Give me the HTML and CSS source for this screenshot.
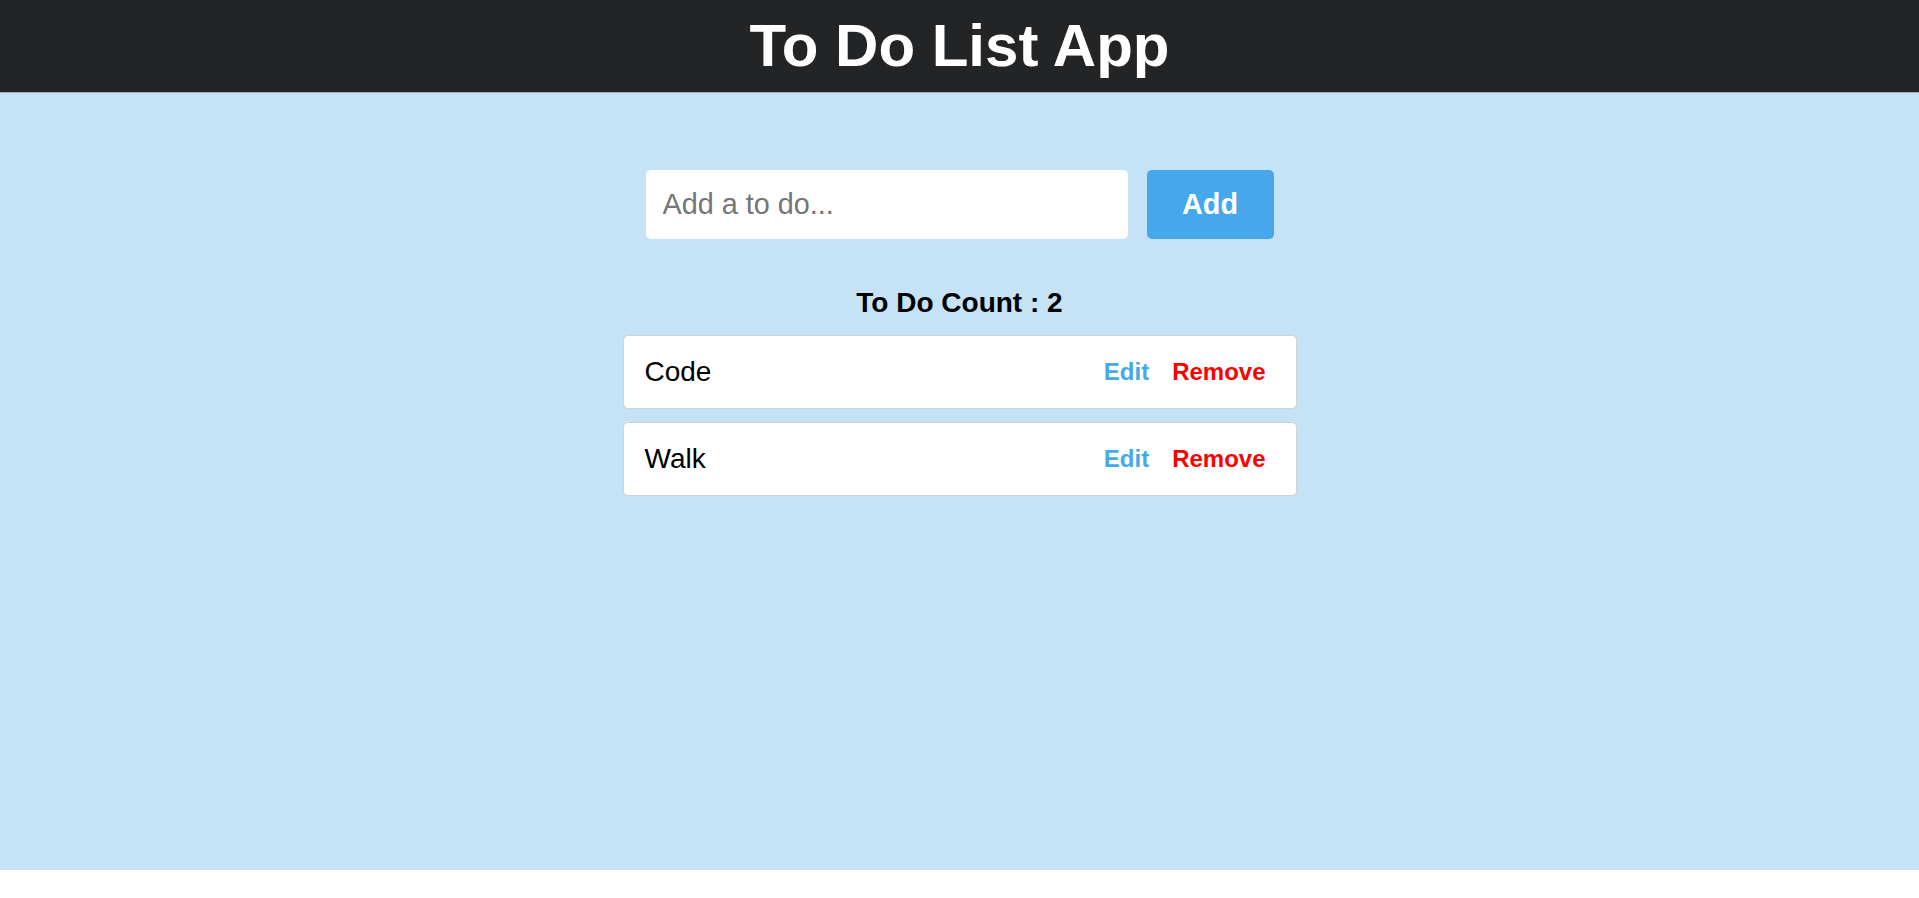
FILE: index.html
```html
<!DOCTYPE html>
<html lang="en">
<head>
<meta charset="utf-8">
<title>To Do List App</title>
<link rel="stylesheet" href="styles.css">
</head>
<body>
<header class="app-header">
  <h1 class="app-title">To Do List App</h1>
</header>
<main class="app-main">
  <form class="add-form" onsubmit="return false">
    <input class="add-input" type="text" placeholder="Add a to do...">
    <button class="add-button" type="submit">Add</button>
  </form>
  <h2 class="todo-count">To Do Count : 2</h2>
  <ul class="todo-list">
    <li class="todo-item">
      <span class="todo-text">Code</span>
      <div class="todo-actions">
        <button class="action edit">Edit</button>
        <button class="action remove">Remove</button>
      </div>
    </li>
    <li class="todo-item">
      <span class="todo-text">Walk</span>
      <div class="todo-actions">
        <button class="action edit">Edit</button>
        <button class="action remove">Remove</button>
      </div>
    </li>
  </ul>
</main>
</body>
</html>
```
FILE: styles.css
```css
* { box-sizing: border-box; }
html, body {
  margin: 0;
  padding: 0;
  background: #ffffff;
  font-family: "Liberation Sans", Arial, sans-serif;
}
.app-header {
  height: 93px;
  background: #232426;
  border-bottom: 1px solid #a3acb3;
  display: flex;
  align-items: center;
  justify-content: center;
}
.app-title {
  margin: 0;
  color: #ffffff;
  font-size: 60px;
  font-weight: bold;
  line-height: 1;
}
.app-main {
  height: 777px;
  background: #c5e2f6;
  padding-top: 77px;
  display: flex;
  flex-direction: column;
  align-items: center;
}
.add-form {
  display: flex;
  gap: 19px;
  margin: 0;
}
.add-input {
  width: 482px;
  height: 69px;
  border: none;
  border-radius: 5px;
  background: #ffffff;
  padding: 0 17px;
  font-family: "Liberation Sans", Arial, sans-serif;
  font-size: 28.8px;
  color: #222;
  outline: none;
}
.add-input::placeholder { color: #757575; }
.add-button {
  width: 127px;
  height: 69px;
  border: none;
  border-radius: 5px;
  background: #46a8eb;
  color: #ffffff;
  font-family: "Liberation Sans", Arial, sans-serif;
  font-size: 28.8px;
  font-weight: bold;
  padding: 0;
}
.todo-count {
  margin: 48px 0 0;
  font-size: 28px;
  font-weight: bold;
  color: #000;
  line-height: 32px;
}
.todo-list {
  list-style: none;
  margin: 16px 0 0;
  padding: 0;
  display: flex;
  flex-direction: column;
  gap: 13px;
}
.todo-item {
  width: 674px;
  height: 74px;
  background: #ffffff;
  border: 1px solid #cfd3d6;
  border-radius: 5px;
  display: flex;
  align-items: center;
  justify-content: space-between;
  padding: 0 30px 0 21px;
}
.todo-text {
  font-size: 28px;
  color: #000;
}
.todo-actions {
  display: flex;
  gap: 23px;
}
.action {
  border: none;
  background: none;
  padding: 0;
  font-family: "Liberation Sans", Arial, sans-serif;
  font-size: 24px;
  font-weight: bold;
}
.action.edit { color: #46a8eb; }
.action.remove { color: #ff0000; }
```
